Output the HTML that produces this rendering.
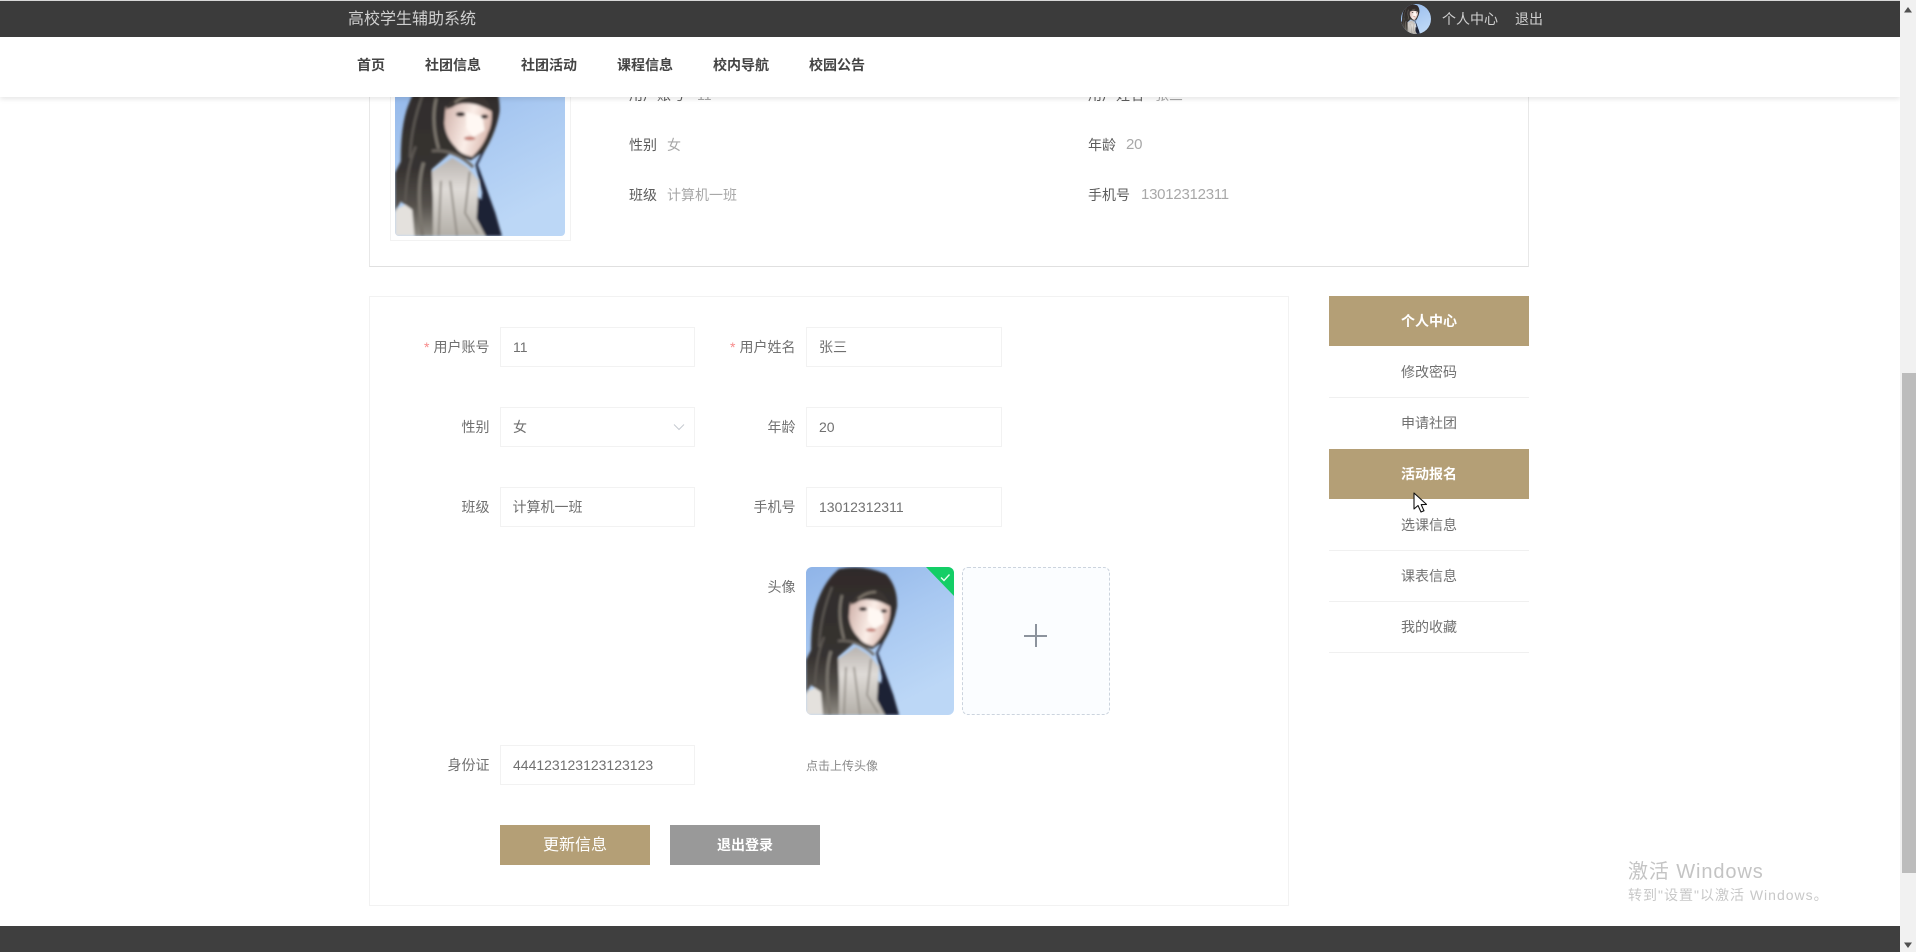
<!DOCTYPE html>
<html lang="zh-CN">
<head>
<meta charset="utf-8">
<title>高校学生辅助系统</title>
<style>
html,body{margin:0;padding:0;width:1916px;height:952px;overflow:hidden;background:#fff;}
body{position:relative;font-family:"Liberation Sans","Noto Sans CJK SC",sans-serif;font-size:14px;color:#707070;}
.a{position:absolute;}
.t{position:absolute;white-space:nowrap;line-height:20px;height:20px;}
.lab{position:absolute;white-space:nowrap;line-height:20px;height:20px;text-align:right;color:#707070;width:110px;}
.lab i{color:#f56c6c;font-style:normal;margin-right:4px;opacity:.8;}
.inp{position:absolute;width:193px;height:38px;border:1px solid #f2f2f2;line-height:38px;color:#707070;box-sizing:content-box;}
.inp.r{width:194px;}
.inp span{position:absolute;left:12px;top:0;white-space:nowrap;}
.nav{position:absolute;top:55px;line-height:20px;font-weight:bold;color:#444;white-space:nowrap;}
.k{color:#5c5c5c;}
.v{color:#a8a8a8;}
.d{font-size:15px;letter-spacing:-.25px;}
.side{position:absolute;left:1329px;width:200px;height:50px;line-height:50px;text-align:center;color:#707070;border-bottom:1px solid #f0f0f0;}
.side.on{background:#b49f76;color:#fff;font-weight:bold;border-bottom:1px solid #fff;}
</style>
</head>
<body>
<svg width="0" height="0" style="position:absolute">
  <defs>
    <linearGradient id="sky" x1="0" y1="0" x2="0.5" y2="1">
      <stop offset="0" stop-color="#8fb4e8"/><stop offset="0.5" stop-color="#a8c8f1"/><stop offset="1" stop-color="#bcd7f6"/>
    </linearGradient>
    <linearGradient id="hairg" x1="0" y1="0" x2="0" y2="1">
      <stop offset="0" stop-color="#2f2b2b"/><stop offset="0.6" stop-color="#363230"/><stop offset="0.82" stop-color="#55514c"/><stop offset="1" stop-color="#8f8b83"/>
    </linearGradient>
    <linearGradient id="jack" x1="0" y1="0" x2="0" y2="1">
      <stop offset="0" stop-color="#b9b4b0"/><stop offset="0.4" stop-color="#dfdbd7"/><stop offset="1" stop-color="#b3afa8"/>
    </linearGradient>
    <linearGradient id="face" x1="0" y1="0" x2="1" y2="0.3">
      <stop offset="0" stop-color="#cfb0a8"/><stop offset="0.6" stop-color="#fbeee8"/><stop offset="1" stop-color="#dcbcb2"/>
    </linearGradient>
    <filter id="bl" x="-5%" y="-5%" width="110%" height="110%"><feGaussianBlur stdDeviation="1.2"/></filter>
    <symbol id="girl" viewBox="0 0 148 148" preserveAspectRatio="none">
      <rect width="148" height="148" fill="url(#sky)"/>
      <g filter="url(#bl)">
        <path d="M78 70 L70 86 L76 110 L72 148 L93 148 L87 127 L79 105 L72 86 L84 62 Z" fill="#1c2236"/>
        <path d="M70 112 L87 127 L93 148 L70 148 Z" fill="#1c2236"/>
        <path d="M0 125 L15 118 L20 148 L0 148 Z" fill="#e4e1dd"/>
        <path d="M32 92 L50 80 L63 88 L73 100 L71 133 L79 148 L30 148 Z" fill="url(#jack)"/>
        <path d="M48 100 L54 148 M65 92 L61 128 L72 146 M40 100 L38 148" stroke="#8f8a83" stroke-width="1.6" fill="none"/>
        <path d="M33 2 Q57 -3 80 7 Q92 20 91 40 Q88 58 78 74 L66 82 L48 76 L32 90 L33 115 L33 148 L17 148 L15 125 L5 118 L0 127 L0 93 L5 83 Q5 50 12 33 Q20 12 33 2 Z" fill="url(#hairg)"/>
        <path d="M25 84 Q18 105 24 148" stroke="#7a766e" stroke-width="3" fill="none"/>
        <path d="M36 28 Q31 48 38 72" stroke="#7d776e" stroke-width="2.5" fill="none"/>
        <path d="M26 20 Q14 50 13 80 M18 70 Q10 90 9 118" stroke="#5f5a54" stroke-width="2" fill="none"/>
        <path d="M32 74 Q52 72 68 88" stroke="#6a655e" stroke-width="2.5" fill="none"/>
        <path d="M44 36 Q62 28 84 38 Q85 50 81 58 Q77 70 67 79 Q57 77 53 71 Q44 62 43 50 Z" fill="url(#face)"/>
        <path d="M62 40 L76 44 L78 56 L68 62 L62 54 Z" fill="#fff8f3"/>
        <path d="M44 38 Q50 24 66 22 Q78 22 85 40 Q74 34 68 33 Q56 31 50 36 Z" fill="#3a3533"/>
        <path d="M52 32 Q60 25 70 25" stroke="#8a8276" stroke-width="1.8" fill="none"/>
        <ellipse cx="57" cy="42" rx="4" ry="2" fill="#2b2222"/>
        <ellipse cx="78" cy="44" rx="3.2" ry="1.8" fill="#2b2222"/>
        <ellipse cx="65" cy="63" rx="5" ry="1.7" fill="#c47f74"/>
      </g>
    </symbol>
  </defs>
</svg>

<!-- top card (behind header) -->
<div class="a" style="left:369px;top:60px;width:1158px;height:205px;border:1px solid #e8e8e8;border-bottom:1px solid #e0e0e0;"></div>
<div class="a" style="left:390px;top:60px;width:179px;height:179px;border:1px solid #f2f2f2;"></div>
<svg class="a" style="left:395px;top:66px;border-radius:4px;" width="170" height="170"><use href="#girl" width="170" height="170"/></svg>

<span class="t k" style="left:629px;top:85px;">用户账号</span><span class="t v" style="left:697px;top:85px;">11</span>
<span class="t k" style="left:1088px;top:85px;">用户姓名</span><span class="t v" style="left:1155px;top:85px;">张三</span>
<span class="t k" style="left:629px;top:135px;">性别</span><span class="t v" style="left:667px;top:135px;">女</span>
<span class="t k" style="left:1088px;top:135px;">年龄</span><span class="t v d" style="left:1126px;top:135px;">20</span>
<span class="t k" style="left:629px;top:185px;">班级</span><span class="t v" style="left:667px;top:185px;">计算机一班</span>
<span class="t k" style="left:1088px;top:185px;">手机号</span><span class="t v d" style="left:1141px;top:185px;">13012312311</span>

<!-- header -->
<div class="a" style="left:0;top:0;width:1900px;height:97px;background:#fff;box-shadow:0 2px 5px rgba(0,0,0,.1);"></div>
<div class="a" style="left:0;top:0;width:1900px;height:1px;background:#d8d8d8;"></div>
<div class="a" style="left:0;top:1px;width:1900px;height:36px;background:#3b3b3b;"></div>
<span class="t" style="left:348px;top:10px;font-size:16px;color:#cfcfcf;">高校学生辅助系统</span>
<svg class="a" style="left:1401px;top:4px;border-radius:50%;" width="30" height="30"><use href="#girl" width="30" height="30"/></svg>
<span class="t" style="left:1442px;top:9px;color:#cfcfcf;">个人中心</span>
<span class="t" style="left:1515px;top:9px;color:#cfcfcf;">退出</span>
<span class="nav" style="left:357px;">首页</span>
<span class="nav" style="left:425px;">社团信息</span>
<span class="nav" style="left:521px;">社团活动</span>
<span class="nav" style="left:617px;">课程信息</span>
<span class="nav" style="left:713px;">校内导航</span>
<span class="nav" style="left:809px;">校园公告</span>

<!-- form panel -->
<div class="a" style="left:369px;top:296px;width:918px;height:608px;border:1px solid #f2f2f2;"></div>

<div class="lab" style="left:379.5px;top:337px;"><i>*</i>用户账号</div>
<div class="inp" style="left:500px;top:327px;"><span>11</span></div>
<div class="lab" style="left:685.5px;top:337px;"><i>*</i>用户姓名</div>
<div class="inp r" style="left:806px;top:327px;"><span>张三</span></div>

<div class="lab" style="left:379.5px;top:417px;">性别</div>
<div class="inp" style="left:500px;top:407px;"><span>女</span>
  <svg class="a" style="left:172px;top:15px;" width="12" height="8" viewBox="0 0 12 8"><path d="M1 1.5 L6 6.5 L11 1.5" fill="none" stroke="#c6cad1" stroke-width="1"/></svg>
</div>
<div class="lab" style="left:685.5px;top:417px;">年龄</div>
<div class="inp r" style="left:806px;top:407px;"><span>20</span></div>

<div class="lab" style="left:379.5px;top:497px;">班级</div>
<div class="inp" style="left:500px;top:487px;"><span style="left:11.5px">计算机一班</span></div>
<div class="lab" style="left:685.5px;top:497px;">手机号</div>
<div class="inp r" style="left:806px;top:487px;"><span>13012312311</span></div>

<div class="lab" style="left:685.5px;top:577px;">头像</div>
<div class="a" style="left:806px;top:567px;width:148px;height:148px;border-radius:6px;overflow:hidden;">
  <svg class="a" style="left:0;top:0;" width="148" height="148"><use href="#girl" width="148" height="148"/></svg>
  <svg class="a" style="left:120px;top:0;" width="28" height="30" viewBox="0 0 28 30">
    <path d="M0 0 L28 0 L28 29 Z" fill="#13ce66"/>
    <path d="M15 10.5 L18 13.5 L23.5 7.5" fill="none" stroke="#e8fff0" stroke-width="1.4"/>
  </svg>
</div>
<div class="a" style="left:962px;top:567px;width:146px;height:146px;border:1px dashed #ccd4de;border-radius:6px;background:#fbfdff;"></div>
<div class="a" style="left:1024px;top:635px;width:23px;height:1.5px;background:#8c939d;"></div>
<div class="a" style="left:1035px;top:624px;width:1.5px;height:23px;background:#8c939d;"></div>

<div class="lab" style="left:379.5px;top:755px;">身份证</div>
<div class="inp" style="left:500px;top:745px;"><span>444123123123123123</span></div>
<span class="t" style="left:806px;top:756px;font-size:12px;color:#8a8a8a;">点击上传头像</span>

<div class="a" style="left:500px;top:825px;width:150px;height:40px;background:#b49f76;color:#fff;font-size:16px;line-height:41px;text-align:center;">更新信息</div>
<div class="a" style="left:670px;top:825px;width:150px;height:40px;background:#999;color:#fff;font-weight:bold;line-height:40px;text-align:center;">退出登录</div>

<!-- sidebar -->
<div class="side on" style="top:296px;">个人中心</div>
<div class="side" style="top:347px;">修改密码</div>
<div class="side" style="top:398px;border-bottom-color:transparent;">申请社团</div>
<div class="side on" style="top:449px;">活动报名</div>
<div class="side" style="top:500px;">选课信息</div>
<div class="side" style="top:551px;">课表信息</div>
<div class="side" style="top:602px;">我的收藏</div>

<!-- cursor -->
<svg class="a" style="left:1413px;top:492px;" width="16" height="22" viewBox="0 0 16 22">
  <path d="M1 1 L1 17 L5 13.5 L8 20 L11 18.8 L8.2 12.6 L13.5 12.4 Z" fill="#fff" stroke="#111" stroke-width="1.1" stroke-linejoin="round"/>
</svg>

<!-- footer -->
<div class="a" style="left:0;top:926px;width:1900px;height:26px;background:#3f3f3f;"></div>

<!-- watermark -->
<span class="t" style="left:1628px;top:858px;height:28px;line-height:28px;font-size:20px;color:#c4c4c4;letter-spacing:.9px;">激活 Windows</span>
<span class="t" style="left:1628px;top:885px;font-size:14px;color:#c8c8c8;letter-spacing:1px;">转到"设置"以激活 Windows。</span>

<!-- scrollbar -->
<div class="a" style="left:1900px;top:0;width:16px;height:952px;background:#f1f1f1;"></div>
<div class="a" style="left:1902px;top:373px;width:14px;height:500px;background:#bcbcbc;"></div>
<svg class="a" style="left:1903px;top:6px;" width="10" height="8"><path d="M1 6.5 L5 1 L9 6.5 Z" fill="#505050"/></svg>
<svg class="a" style="left:1903px;top:941px;" width="10" height="8"><path d="M1 1.5 L9 1.5 L5 7 Z" fill="#505050"/></svg>
</body>
</html>
